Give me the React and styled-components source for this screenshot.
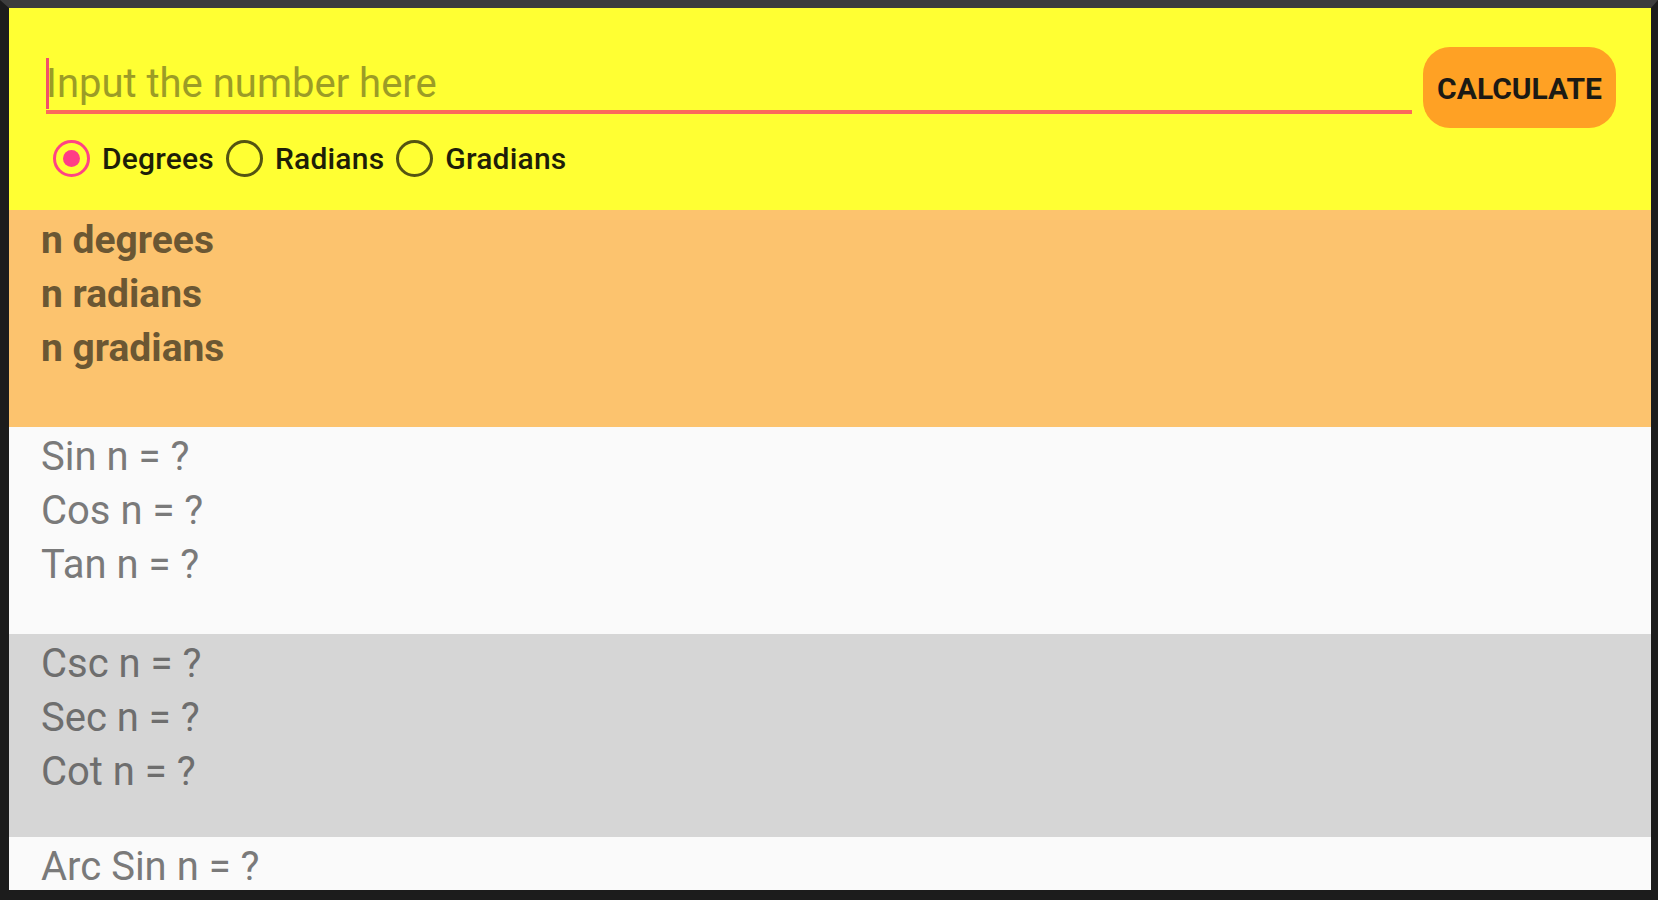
import React, { useState } from 'react';
import styled, { createGlobalStyle } from 'styled-components';

const GlobalStyle = createGlobalStyle`
  html, body {
    margin: 0;
    padding: 0;
    background: #1c1c1c;
  }
  * {
    box-sizing: border-box;
  }
`;

const Frame = styled.div`
  position: relative;
  width: 1658px;
  height: 900px;
  border-style: solid;
  border-color: #3d3d3d #1c1c1c #1c1c1c #1c1c1c;
  border-width: 8px 7px 10px 9px;
  display: flex;
  flex-direction: column;
  overflow: hidden;
  font-family: Roboto, 'Noto Sans', sans-serif;
`;

const StatusIcons = styled.div`
  position: absolute;
  top: -8px;
  right: 14px;
  display: flex;
  gap: 6px;
  height: 4px;
`;

const StatusDot = styled.span`
  width: ${(p) => p.$w}px;
  height: 4px;
  border-radius: 2px;
  background: #4aa3d6;
  opacity: 0.7;
`;

const Header = styled.div`
  height: 202px;
  flex-shrink: 0;
  background: #ffff33;
  padding: 39px 35px 0 37px;
  display: flex;
  flex-direction: column;
`;

const InputRow = styled.div`
  display: flex;
  align-items: flex-start;
  gap: 11px;
`;

const InputWrap = styled.div`
  position: relative;
  flex: 1;
  height: 67px;
  border-bottom: 4px solid #fb6a5c;
`;

const Caret = styled.span`
  position: absolute;
  left: 0;
  top: 11px;
  width: 3px;
  height: 51px;
  background: #f2506a;
`;

const NumberInput = styled.input`
  width: 100%;
  height: 63px;
  border: none;
  outline: none;
  background: transparent;
  padding: 10px 0 0 0;
  font-family: Roboto, 'Noto Sans', sans-serif;
  font-size: 40px;
  color: #333;
  &::placeholder {
    color: #9c9c26;
  }
`;

const CalcButton = styled.button`
  width: 193px;
  height: 81px;
  flex-shrink: 0;
  border: none;
  border-radius: 27px;
  background: #ffa124;
  color: #1c1a14;
  font-family: Roboto, 'Noto Sans', sans-serif;
  font-weight: 700;
  font-size: 30px;
  padding: 2px 0 0;
  cursor: pointer;
`;

const RadioRow = styled.div`
  display: flex;
  align-items: center;
  gap: 12px;
  margin: 12px 0 0 7px;
`;

const RadioItem = styled.label`
  display: flex;
  align-items: center;
  gap: 12px;
  cursor: pointer;
  font-size: 30px;
  font-weight: 500;
  letter-spacing: 0.2px;
  color: #1e1e08;
`;

const RadioCircle = styled.span`
  width: 37px;
  height: 37px;
  border-radius: 50%;
  border: 3px solid ${(p) => (p.$on ? '#ff4384' : '#545412')};
  display: flex;
  align-items: center;
  justify-content: center;
  &::after {
    content: '';
    width: 17px;
    height: 17px;
    border-radius: 50%;
    background: #ff3d86;
    display: ${(p) => (p.$on ? 'block' : 'none')};
  }
`;

const Section = styled.div`
  height: ${(p) => (p.$h ? `${p.$h}px` : 'auto')};
  flex: ${(p) => (p.$h ? '0 0 auto' : '1')};
  background: ${(p) => p.$bg};
  padding: 3px 0 0 32px;
  overflow: hidden;
`;

const Line = styled.div`
  font-size: ${(p) => (p.$bold ? 39 : 40)}px;
  line-height: 54px;
  font-weight: ${(p) => (p.$bold ? 700 : 400)};
  color: ${(p) => p.$color};
  white-space: nowrap;
`;

const units = ['Degrees', 'Radians', 'Gradians'];

const groups = [
  { bg: '#fcc36e', h: 217, bold: true, color: '#6b5733', lines: ['n degrees', 'n radians', 'n gradians'] },
  { bg: '#fafafa', h: 207, color: '#7a7a7a', lines: ['Sin n = ?', 'Cos n = ?', 'Tan n = ?'] },
  { bg: '#d6d6d6', h: 203, color: '#6e6e6e', lines: ['Csc n = ?', 'Sec n = ?', 'Cot n = ?'] },
  { bg: '#fafafa', color: '#7a7a7a', lines: ['Arc Sin n = ?'] },
];

export default function App() {
  const [unit, setUnit] = useState('Degrees');
  const [value, setValue] = useState('');

  return (
    <>
      <GlobalStyle />
      <Frame>
        <StatusIcons>
          <StatusDot $w={10} />
          <StatusDot $w={6} />
          <StatusDot $w={6} />
          <StatusDot $w={8} />
        </StatusIcons>
        <Header>
          <InputRow>
            <InputWrap>
              {value === '' && <Caret />}
              <NumberInput
                placeholder="Input the number here"
                value={value}
                onChange={(e) => setValue(e.target.value)}
              />
            </InputWrap>
            <CalcButton>CALCULATE</CalcButton>
          </InputRow>
          <RadioRow>
            {units.map((u) => (
              <RadioItem key={u} onClick={() => setUnit(u)}>
                <RadioCircle $on={unit === u} />
                {u}
              </RadioItem>
            ))}
          </RadioRow>
        </Header>
        {groups.map((g, i) => (
          <Section key={i} $bg={g.bg} $h={g.h}>
            {g.lines.map((l) => (
              <Line key={l} $bold={g.bold} $color={g.color}>
                {l}
              </Line>
            ))}
          </Section>
        ))}
      </Frame>
    </>
  );
}
